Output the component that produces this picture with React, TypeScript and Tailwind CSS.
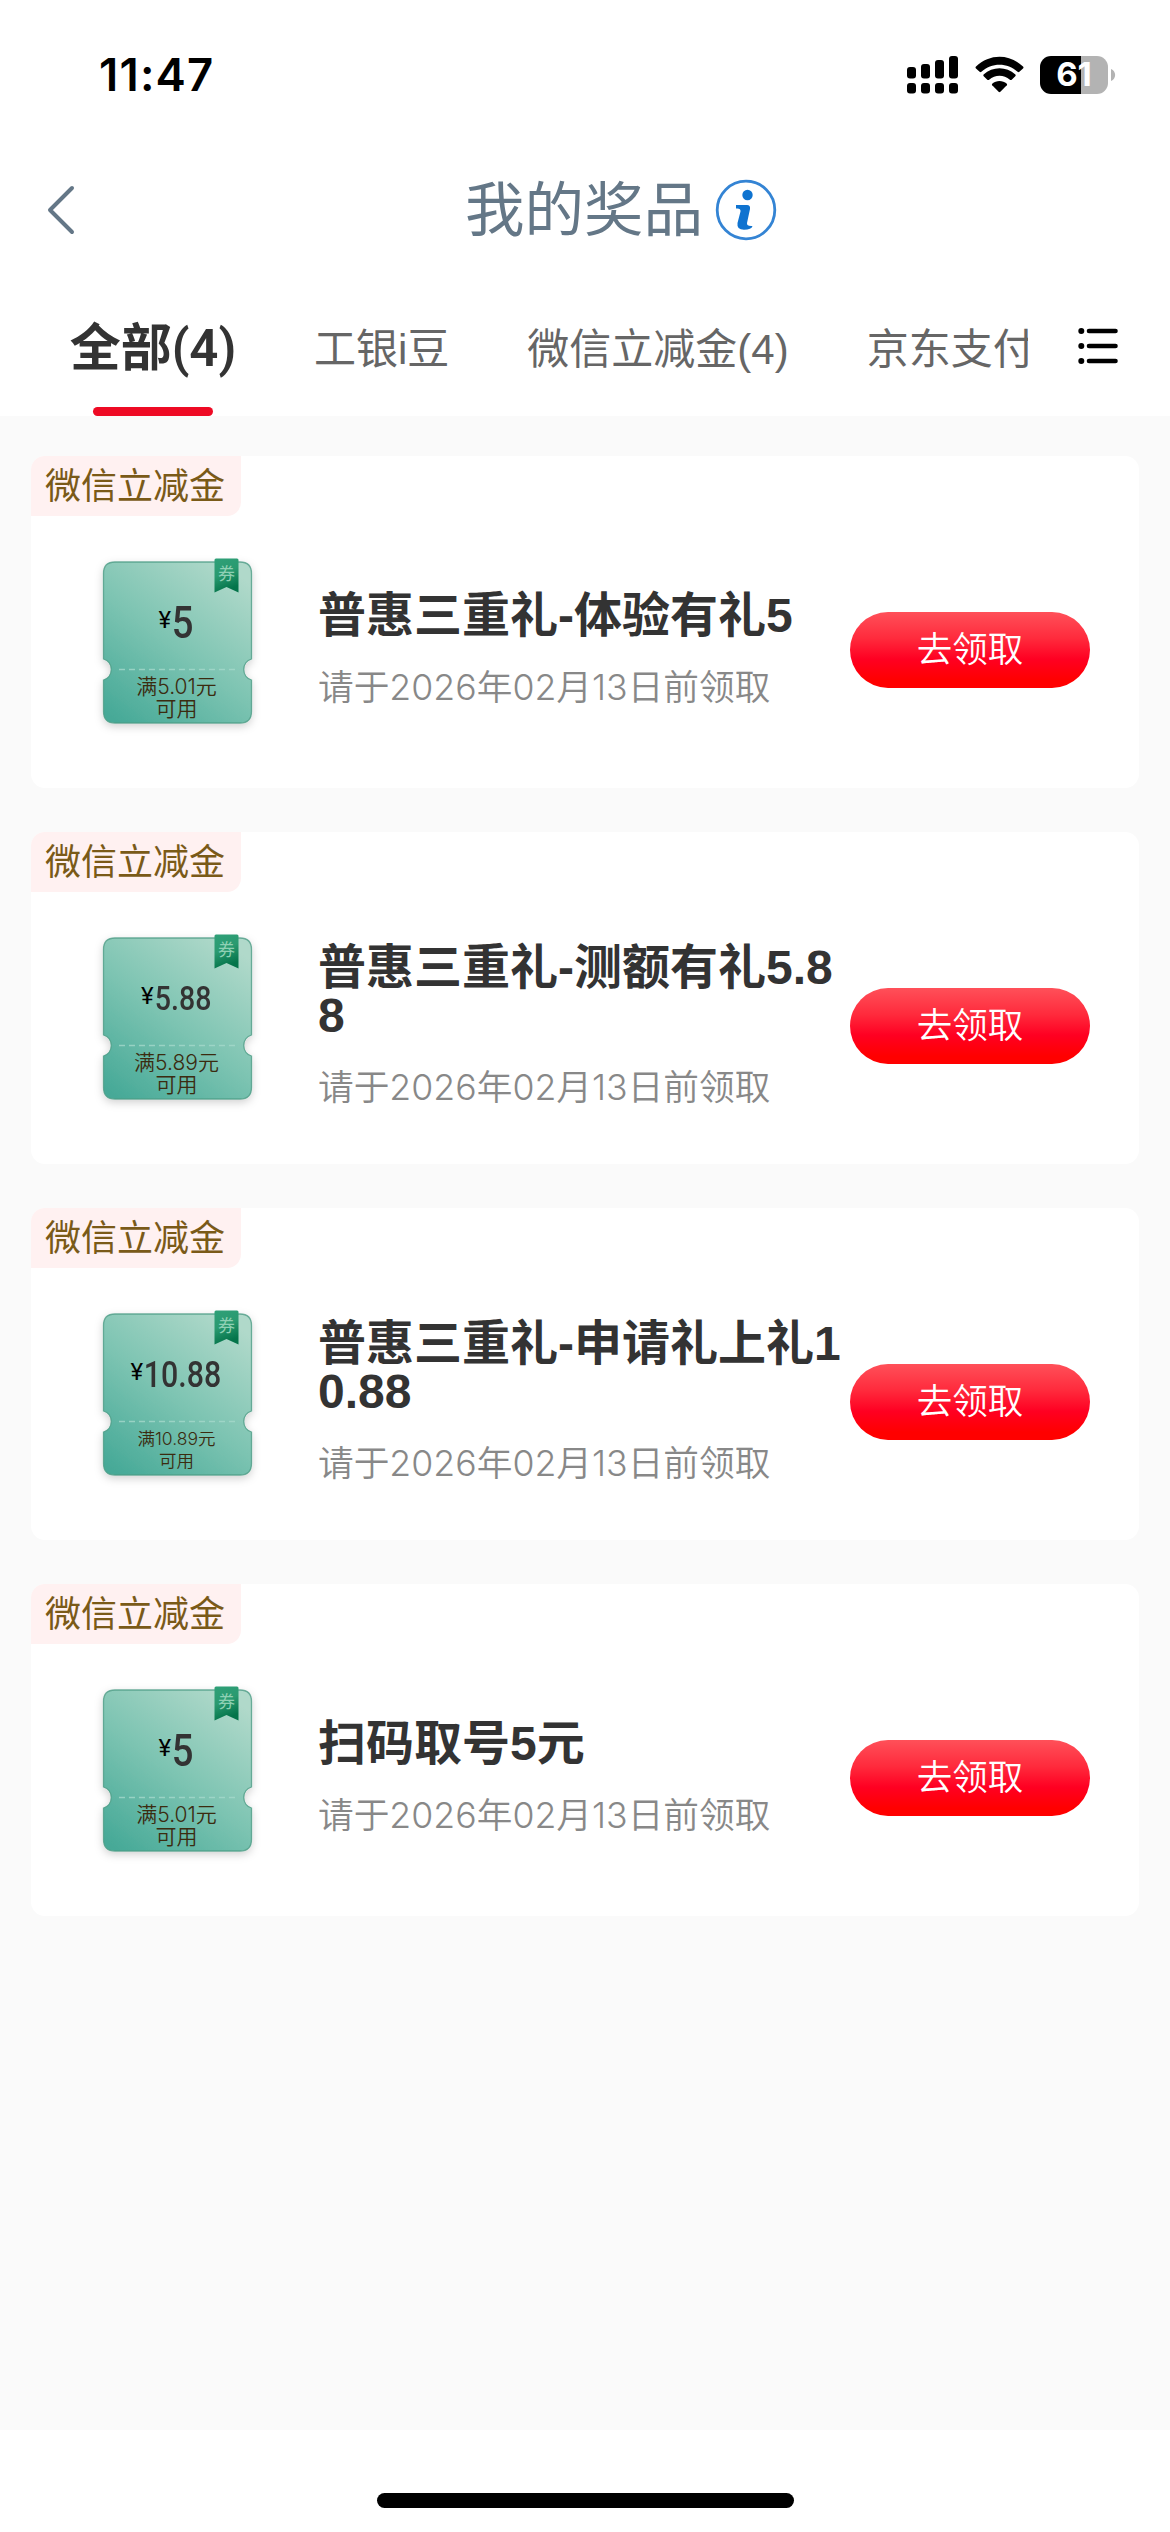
interface Prize {
  id: number
  tag: string
  amount: string
  amountClass: string
  conditionClass: string
  condition: string
  title: string
  deadline: string
}

const TABS = ['工银i豆', '微信立减金(4)', '京东支付']

const PRIZES: Prize[] = [
  {
    id: 1,
    tag: '微信立减金',
    amount: '5',
    amountClass: 'text-[45px] scale-x-[0.85] mr-[-4px]',
    conditionClass: 'text-[21px]',
    condition: '满5.01元',
    title: '普惠三重礼-体验有礼5',
    deadline: '请于2026年02月13日前领取',
  },
  {
    id: 2,
    tag: '微信立减金',
    amount: '5.88',
    amountClass: 'text-[34px] scale-x-[0.84] mr-[-11px]',
    conditionClass: 'text-[21px]',
    condition: '满5.89元',
    title: '普惠三重礼-测额有礼5.88',
    deadline: '请于2026年02月13日前领取',
  },
  {
    id: 3,
    tag: '微信立减金',
    amount: '10.88',
    amountClass: 'text-[37px] scale-x-[0.82] mr-[-17px]',
    conditionClass: 'text-[17.5px]',
    condition: '满10.89元',
    title: '普惠三重礼-申请礼上礼10.88',
    deadline: '请于2026年02月13日前领取',
  },
  {
    id: 4,
    tag: '微信立减金',
    amount: '5',
    amountClass: 'text-[45px] scale-x-[0.85] mr-[-4px]',
    conditionClass: 'text-[21px]',
    condition: '满5.01元',
    title: '扫码取号5元',
    deadline: '请于2026年02月13日前领取',
  },
]

function StatusBar() {
  return (
    <div className="flex h-[149px] items-center justify-between pl-[99px] pr-[54px] font-['Inter',sans-serif]">
      <span className="text-[45.5px] font-semibold leading-none tracking-[1.2px]">11:47</span>
      <div className="flex items-center">
        <svg width="52" height="38" viewBox="0 0 52 38">
          <rect x="0" y="11" width="9" height="11.5" rx="3" />
          <rect x="14" y="8" width="9" height="14.5" rx="3" />
          <rect x="28" y="4" width="9" height="18.5" rx="3" />
          <rect x="42" y="0" width="9" height="22.5" rx="3" />
          <rect x="0" y="27" width="9" height="10.5" rx="3" />
          <rect x="14" y="27" width="9" height="10.5" rx="3" />
          <rect x="28" y="27" width="9" height="10.5" rx="3" />
          <rect x="42" y="27" width="9" height="10.5" rx="3" />
        </svg>
        <svg width="49" height="37" viewBox="0 0 49 37" className="ml-4">
          <path d="M1 10.6 Q0 11.4 1 12.4 L4.6 15.8 Q5.5 16.5 6.4 15.8 C16.5 6.4 32.5 6.4 42.6 15.8 Q43.5 16.5 44.4 15.8 L48 12.4 Q49 11.4 48 10.6 C34.5 -2.6 14.5 -2.6 1 10.6Z" />
          <path d="M8.6 18.5 Q7.8 19.4 8.7 20.2 L12.3 23.7 Q13.2 24.5 14.1 23.7 C20.2 18.4 28.8 18.4 34.9 23.7 Q35.8 24.5 36.7 23.7 L40.3 20.2 Q41.2 19.4 40.4 18.5 C31.3 10 17.7 10 8.6 18.5Z" />
          <path d="M17.2 27.7 Q16.5 28.5 17.2 29.3 L23.6 35.8 Q24.5 36.6 25.4 35.8 L31.8 29.3 Q32.5 28.5 31.8 27.7 C27.7 24 21.3 24 17.2 27.7Z" />
        </svg>
        <div className="ml-4 flex items-center">
          <div className="flex h-[38px] w-[68px] items-center justify-center rounded-[11px] bg-[linear-gradient(90deg,#000_60%,#b3b3b3_60%)] text-[33px] font-bold leading-none text-white">
            61
          </div>
          <svg width="5" height="12" viewBox="0 0 5 12" className="ml-[3px]">
            <path d="M0 0 C5.5 2 5.5 10 0 12Z" fill="#b3b3b3" />
          </svg>
        </div>
      </div>
    </div>
  )
}

function NavBar() {
  return (
    <div className="flex h-[122px] items-center text-[#647787]">
      <svg width="28" height="50" viewBox="0 0 28 50" className="ml-[47px]">
        <path d="M25 3 L3 25 L25 47" fill="none" stroke="currentColor" strokeWidth="4" strokeLinecap="round" strokeLinejoin="round" />
      </svg>
      <h1 className="ml-[390px] pt-[2px] text-[59.5px] font-normal leading-none">我的奖品</h1>
      <svg width="62" height="62" viewBox="0 0 62 62" className="ml-[12px]">
        <circle cx="31" cy="31" r="28.8" fill="none" stroke="#3484d4" strokeWidth="2.8" />
        <circle cx="32.5" cy="16" r="5.2" fill="#0f73d0" />
        <path d="M21 26 H32 Q35.5 26 35 30 L32 44 Q31.5 47.5 37.5 47 Q36.5 50.8 29 50.8 Q21.5 50.8 22.5 44 L25.5 32.5 Q26 29 21 29.5Z" fill="#0f73d0" />
      </svg>
    </div>
  )
}

function TabBar() {
  return (
    <div className="flex h-[145px]">
      <div className="flex w-[1028px] overflow-hidden whitespace-nowrap">
        <div className="ml-[69px] flex w-[168px] shrink-0 flex-col items-center justify-between pt-[45px]">
          <span className="font-['Roboto','Noto_Sans_CJK_SC',sans-serif] text-[51px] font-semibold leading-[66px] text-[#333]">全部(4)</span>
          <span className="h-[9px] w-[120px] rounded-full bg-[#ee0a24]" />
        </div>
        <div className="ml-[77px] flex gap-[78px] pt-[49px] text-[42px] leading-[60px] text-[#666]">
          {TABS.map((tab) => (
            <span key={tab}>{tab}</span>
          ))}
        </div>
      </div>
      <svg width="40" height="38" viewBox="0 0 40 38" className="ml-[50px] mt-[56px]" fill="none" stroke="#000" strokeLinecap="round">
        <path d="M11 4 H37.5 M11 19 H37.5 M11 34 H37.5" strokeWidth="4.6" />
        <path d="M3.3 4 h0.01 M3.3 19 h0.01 M3.3 34 h0.01" strokeWidth="6" />
      </svg>
    </div>
  )
}

function Ticket({ prize }: { prize: Prize }) {
  return (
    <div className="relative h-[166px] w-[149px]">
      <svg width="172" height="188" viewBox="-12 -6 172 188" className="absolute -left-3 -top-1.5">
        <defs>
          <linearGradient id={`body${prize.id}`} x1="0.1" y1="1" x2="0.8" y2="0">
            <stop offset="0" stopColor="#46a997" />
            <stop offset="0.5" stopColor="#7dc4b2" />
            <stop offset="1" stopColor="#b0d9ca" />
          </linearGradient>
          <linearGradient id={`ribbon${prize.id}`} x1="0" y1="0" x2="0.3" y2="1">
            <stop offset="0" stopColor="#2fa078" />
            <stop offset="0.5" stopColor="#2a9a70" />
            <stop offset="1" stopColor="#04744a" />
          </linearGradient>
          <filter id={`shadow${prize.id}`} x="-10%" y="-10%" width="120%" height="125%">
            <feDropShadow dx="0" dy="3" stdDeviation="4" floodColor="#000" floodOpacity="0.18" />
          </filter>
        </defs>
        <path
          d="M12 4 H137 Q148.5 4 148.5 15.5 V101 A11 11 0 0 0 148.5 122 V153.5 Q148.5 165 137 165 H12 Q0.5 165 0.5 153.5 V122 A11 11 0 0 0 0.5 101 V15.5 Q0.5 4 12 4Z"
          fill={`url(#body${prize.id})`}
          stroke="#4d9c86"
          strokeOpacity="0.8"
          strokeWidth="1.3"
          filter={`url(#shadow${prize.id})`}
        />
        <path d="M16 111.5 H133" stroke="#a5d8ca" strokeOpacity="0.8" strokeWidth="1.6" strokeDasharray="6 4" />
        <path d="M111.5 2 Q111.5 0.5 113 0.5 H134 Q135.5 0.5 135.5 2 V34.5 L123.5 29 L111.5 34.5Z" fill={`url(#ribbon${prize.id})`} />
        <text x="123.5" y="22" textAnchor="middle" fontSize="17" fill="#8fd0b4">券</text>
      </svg>
      <div className="relative flex h-[112px] items-center justify-center pr-[3px] pt-[16px] font-['Roboto',sans-serif] leading-none">
        <span className="mb-[5px] text-[24px] text-black">¥</span>
        <span className={`origin-left pl-px font-medium text-[#333] ${prize.amountClass}`}>{prize.amount}</span>
      </div>
      <div className={`relative pr-[2px] pt-[6px] text-center font-['Inter','Noto_Sans_CJK_SC',sans-serif] font-[350] leading-[22px] text-[#3b2b10] ${prize.conditionClass}`}>
        {prize.condition}
        <br />
        可用
      </div>
    </div>
  )
}

function PrizeCard({ prize }: { prize: Prize }) {
  return (
    <div className="flex h-[332px] flex-col rounded-[14px] bg-white">
      <div className="flex h-[60px] w-[210px] items-center justify-center rounded-br-[14px] rounded-tl-[14px] bg-[#fff1f1] pr-[2px] pt-[2px] text-[36px] leading-none text-[#7a5a18]">
        {prize.tag}
      </div>
      <div className="-mt-[60px] flex h-[332px] pl-[72px] pr-[49px]">
        <div className="pt-[102px]">
          <Ticket prize={prize} />
        </div>
        <div className="ml-[66px] flex h-full w-[532px] flex-col justify-center pt-[58px]">
          <h2 className="break-all text-[48px] font-bold leading-[48px] text-[#333]">{prize.title}</h2>
          <p className="mt-6 whitespace-nowrap font-['Inter','Noto_Sans_CJK_SC',sans-serif] text-[35.7px] font-[350] leading-[46px] text-[#888]">
            {prize.deadline}
          </p>
        </div>
        <button className="ml-auto mt-[156px] h-[76px] w-[240px] rounded-full bg-[linear-gradient(180deg,#ff5059_0%,#ff2a3c_35%,#ff0022_62%,#ff0000_90%)] pt-[2px] text-[35.5px] font-[350] leading-none text-white">
          去领取
        </button>
      </div>
    </div>
  )
}

export default function App() {
  return (
    <div className="flex h-[2532px] w-[1170px] flex-col bg-white font-['Liberation_Sans','Noto_Sans_CJK_SC',sans-serif]">
      <StatusBar />
      <NavBar />
      <TabBar />
      <main className="flex h-[2014px] flex-col gap-[44px] bg-[#fafafa] px-[31px] pt-[40px]">
        {PRIZES.map((prize) => (
          <PrizeCard key={prize.id} prize={prize} />
        ))}
      </main>
      <div className="flex flex-1 items-end justify-center pb-[24px]">
        <div className="h-[15px] w-[417px] rounded-full bg-black" />
      </div>
    </div>
  )
}
